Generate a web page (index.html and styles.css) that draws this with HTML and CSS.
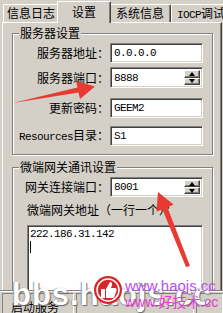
FILE: index.html
```html
<!DOCTYPE html>
<html lang="zh">
<head>
<meta charset="utf-8">
<title>设置</title>
<link rel="stylesheet" href="styles.css">
</head>
<body>
<div class="win">
  <div class="tabs">
    <div class="tab t1">信息日志</div>
    <div class="tab active">设置</div>
    <div class="tab t3">系统信息</div>
    <div class="tab t4"><span class="lat">IOCP</span>调试</div>
  </div>
  <div class="panel">
    <div class="group g1">
      <div class="legend">服务器设置</div>
      <div class="row r1"><span class="lbl">服务器地址：</span><div class="field"><span class="val">0.0.0.0</span></div></div>
      <div class="row r2"><span class="lbl">服务器端口：</span><div class="field"><span class="val">8888</span><div class="spin"><div class="sb up"></div><div class="sb down"></div></div></div></div>
      <div class="row r3"><span class="lbl">更新密码：</span><div class="field"><span class="val">GEEM2</span></div></div>
      <div class="row r4"><span class="lbl"><span class="lat">Resources</span>目录：</span><div class="field"><span class="val">S1</span></div></div>
    </div>
    <div class="group g2">
      <div class="legend">微端网关通讯设置</div>
      <div class="row r5"><span class="lbl">网关连接端口：</span><div class="field"><span class="val">8001</span><div class="spin"><div class="sb up"></div><div class="sb down"></div></div></div></div>
      <div class="addr-lbl">微端网关地址（一行一个）：</div>
      <div class="memo"><div class="val">222.186.31.142</div><div class="caret"></div></div>
    </div>
  </div>
  <div class="status">
    <div class="cell c1">启动服务</div>
    <div class="cell c2"></div>
    <div class="cell c3"></div>
  </div>

  <svg class="arrows" width="223" height="313" viewBox="0 0 223 313">
    <polygon points="13,103 77.5,87.5 76,81 95,86.5 80,99 78.5,92.5" fill="#e83a30"/>
    <polygon points="158,192 173.5,204.5 167.5,207.5 190,266 186,267 162.5,209.5 156.5,211.5" fill="#e83a30"/>
  </svg>

  <div class="wm">
    <div class="wm-big">bbs.haojs.cc</div>
    <svg class="wm-logo" width="30" height="30" viewBox="0 0 30 30">
      <circle cx="15" cy="15" r="14" fill="#d8272b"/>
      <circle cx="15" cy="15" r="11" fill="none" stroke="#fff" stroke-width="1.5"/>
      <path d="M8 14 h4 v9 h-4 z M13 14 l4 -7 c1.5 0 2.5 1 2 3 l-1 3 h4 c1.5 0 2 1.5 1.5 2.5 l-2 6 c-0.5 1 -1 1.5 -2 1.5 h-6.5 z" fill="#fff"/>
    </svg>
    <div class="wm-url1">www.haojs.cc</div>
    <div class="wm-url2">www.好技术.cc</div>
  </div>
</div>
</body>
</html>
```

FILE: styles.css
```css
* { box-sizing: border-box; }
html, body { margin: 0; padding: 0; }
body {
  background: #d4d0c8;
  font-family: "Noto Sans CJK SC", "Liberation Sans", sans-serif;
  font-size: 12px;
  color: #000;
}
.win {
  position: relative;
  width: 223px;
  height: 313px;
  overflow: hidden;
  background: #d4d0c8;
}
.lat {
  font-family: "Liberation Mono", monospace;
  font-size: 11px;
  letter-spacing: -0.6px;
}

/* tabs */
.tabs {
  display: flex;
  align-items: flex-end;
  height: 22px;
  padding-left: 3px;
  white-space: nowrap;
}
.tab {
  position: relative;
  height: 18px;
  line-height: 16px;
  text-align: center;
  border-top: 1px solid #fff;
  border-left: 1px solid #fff;
  border-right: 1px solid #404040;
  box-shadow: inset -1px 0 #808080;
  border-radius: 2px 2px 0 0;
  background: #d4d0c8;
  flex: none;
}
.t1 { width: 56px; }
.t3 { width: 62px; }
.t4 { width: 60px; text-align: left; padding-left: 5px; }
.tab.active {
  height: 22px;
  width: 54px;
  margin: 0 -2px -1px -2px;
  line-height: 20px;
  z-index: 2;
}

/* panel */
.panel {
  width: 220px;
  height: 268px;
  margin-left: 2px;
  border-top: 1px solid #fff;
  border-left: 1px solid #fff;
  border-right: 1px solid #404040;
  box-shadow: inset -1px 0 #808080;
  overflow: hidden;
  padding: 0 0 0 9px;
}

/* group boxes */
.group {
  width: 201px;
  border: 1px solid #808080;
  box-shadow: inset 1px 1px #fff, 1px 1px #fff;
  padding: 0 9px 0 0;
}
.g1 { margin-top: 10px; padding-bottom: 8px; }
.g2 { margin-top: 12px; height: 140px; }
.legend {
  width: max-content;
  margin: -8px 0 0 6px;
  padding: 0 1px;
  height: 14px;
  line-height: 14px;
  background: #d4d0c8;
}

/* rows */
.row {
  display: flex;
  align-items: center;
  height: 20px;
}
.r1 { margin-top: 3px; }
.r2 { margin-top: 4px; height: 21px; }
.r3 { margin-top: 10px; }
.r4 { margin-top: 8px; }
.r5 { margin-top: 3px; }
.lbl {
  flex: 1;
  text-align: right;
  white-space: nowrap;
  line-height: 14px;
}
.field {
  display: flex;
  align-items: center;
  width: 93px;
  height: 100%;
  margin-left: 1px;
  background: #fff;
  border-top: 1px solid #808080;
  border-left: 1px solid #808080;
  border-bottom: 1px solid #fff;
  border-right: 1px solid #fff;
  box-shadow: inset 1px 1px #404040, inset -1px -1px #d4d0c8;
  padding: 2px 2px 2px 3px;
}
.val {
  flex: 1;
  font-family: "Liberation Mono", monospace;
  font-size: 11px;
  letter-spacing: -0.6px;
  line-height: 12px;
}

/* spinner */
.spin {
  display: flex;
  flex-direction: column;
  width: 16px;
  height: 100%;
  flex: none;
}
.sb {
  flex: 1;
  background: #d4d0c8;
  border-top: 1px solid #fff;
  border-left: 1px solid #fff;
  border-right: 1px solid #404040;
  border-bottom: 1px solid #404040;
  box-shadow: inset -1px -1px #808080;
  display: flex;
  align-items: center;
  justify-content: center;
}
.sb::after {
  content: "";
  width: 0;
  height: 0;
  border-left: 3.5px solid transparent;
  border-right: 3.5px solid transparent;
}
.up::after { border-bottom: 4px solid #000; }
.down::after { border-top: 4px solid #000; }

/* address memo */
.addr-lbl {
  margin: 6px 0 0 14px;
  height: 14px;
  line-height: 14px;
  white-space: nowrap;
}
.memo {
  width: 176px;
  height: 70px;
  margin: 8px 0 0 14px;
  background: #fff;
  border-top: 1px solid #808080;
  border-left: 1px solid #808080;
  border-bottom: 1px solid #fff;
  border-right: 1px solid #fff;
  box-shadow: inset 1px 1px #404040, inset -1px -1px #d4d0c8;
  padding: 2px 2px 2px 2px;
}
.memo .val { line-height: 12px; }
.caret {
  width: 1px;
  height: 12px;
  background: #000;
  margin-top: 1px;
}

/* status bar */
.status {
  display: flex;
  height: 23px;
  padding: 2px 0 0 2px;
  gap: 2px;
  border-top: 1px solid #808080;
  box-shadow: inset 0 1px #fff;
}
.cell {
  height: 22px;
  border-top: 1px solid #808080;
  border-left: 1px solid #808080;
  border-right: 1px solid #fff;
  padding: 6px 0 0 8px;
  line-height: 14px;
  white-space: nowrap;
}
.c1 { width: 72px; }
.c2 { width: 118px; }
.c3 { flex: 1; }

/* overlays */
.arrows {
  position: absolute;
  left: 0;
  top: 0;
  pointer-events: none;
  z-index: 5;
}
.wm {
  position: absolute;
  left: 0;
  top: 0;
  width: 223px;
  height: 313px;
  pointer-events: none;
  z-index: 6;
}
.wm-big {
  position: absolute;
  left: 12px;
  top: 277px;
  font-family: "Liberation Sans", sans-serif;
  font-weight: bold;
  font-size: 31px;
  letter-spacing: 1px;
  color: #fff;
  text-shadow: 1px 1px 1px #666, -1px 0 1px #999;
  white-space: nowrap;
}
.wm-logo {
  position: absolute;
  left: 93px;
  top: 275px;
}
.wm-url1 {
  position: absolute;
  left: 125px;
  top: 277px;
  font-family: "Liberation Sans", sans-serif;
  font-size: 15px;
  line-height: 17px;
  color: #b94ee8;
  white-space: nowrap;
}
.wm-url2 {
  position: absolute;
  left: 125px;
  top: 294px;
  font-family: "Liberation Sans", "Noto Sans CJK SC", sans-serif;
  font-size: 14px;
  line-height: 17px;
  color: #e03cd0;
  white-space: nowrap;
}
```
